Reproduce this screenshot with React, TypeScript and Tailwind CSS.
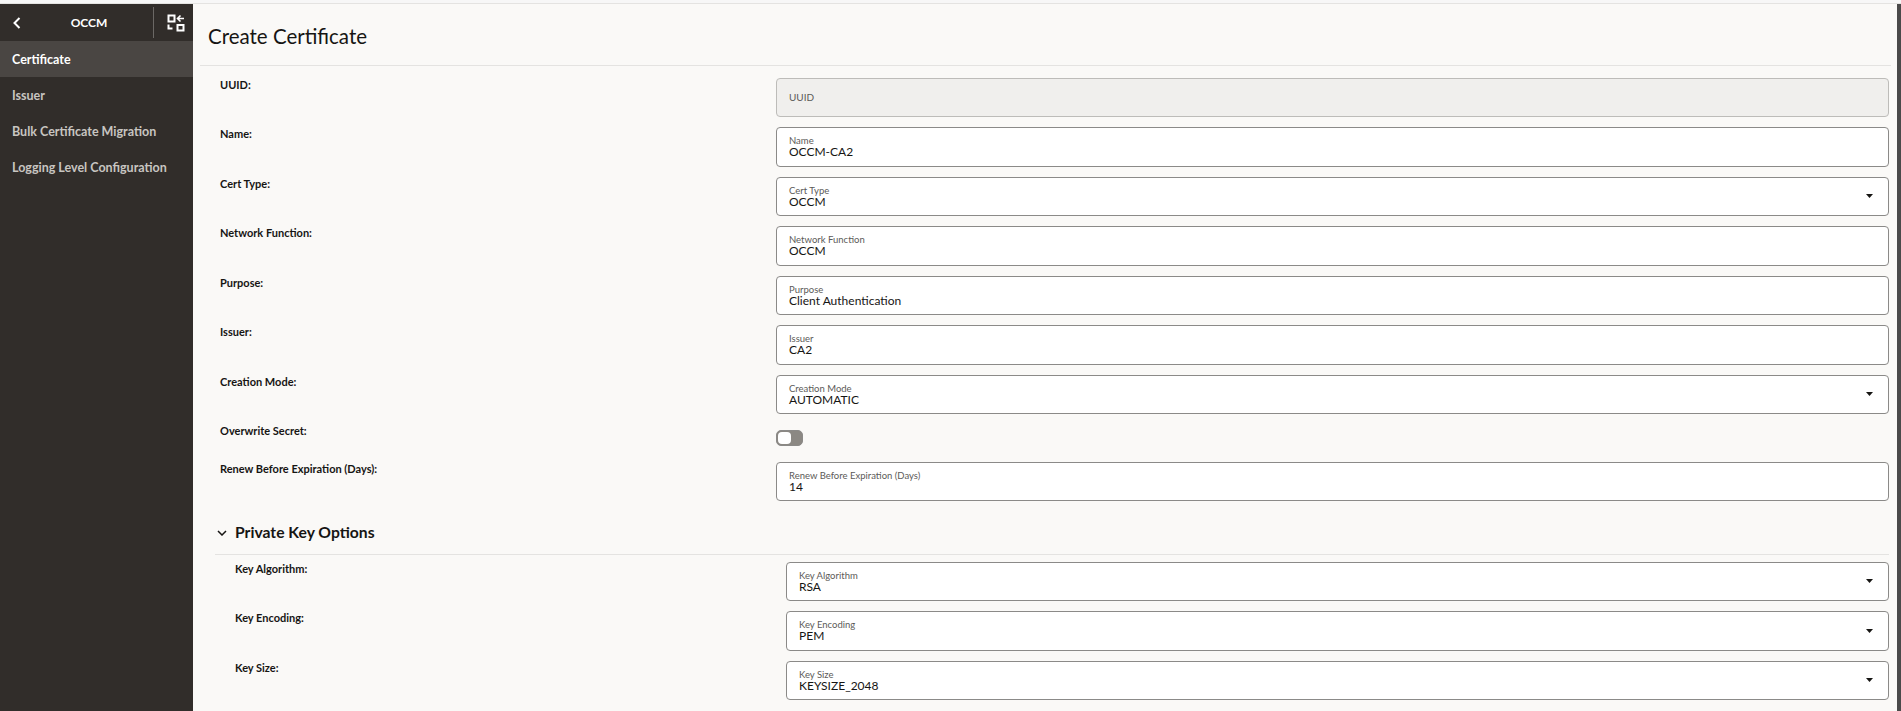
import React from "react";

const font = "font-['Lato','Noto_Sans',sans-serif]";

function Arrow() {
  return (
    <svg width="7" height="4" viewBox="0 0 7 4" className="absolute right-[15px] top-1/2 -translate-y-1/2">
      <path d="M0 0h7L3.5 4z" fill="#161513" />
    </svg>
  );
}

function Field({ label, value, select }: { label: string; value: string; select?: boolean }) {
  return (
    <div className="relative flex h-[39.5px] flex-1 flex-col justify-center rounded-[4px] border border-[#8b8a88] bg-white pl-[12px]">
      <span className="text-[9.5px] leading-[11px] text-[#5c5a58]">{label}</span>
      <span className="text-[12px] leading-[12px] text-[#161513]">{value}</span>
      {select && <Arrow />}
    </div>
  );
}

function Row({ label, children, sub }: { label: string; children: React.ReactNode; sub?: boolean }) {
  return (
    <div className="flex">
      <div className={sub ? "w-[551px] shrink-0 text-[11px] font-bold leading-[14px] text-[#161513]" : "w-[556px] shrink-0 text-[11px] font-bold leading-[14px] text-[#161513]"}>
        {label}
      </div>
      {children}
    </div>
  );
}

const mainFields = [
  { label: "Name", value: "OCCM-CA2" },
  { label: "Cert Type", value: "OCCM", select: true },
  { label: "Network Function", value: "OCCM" },
  { label: "Purpose", value: "Client Authentication" },
  { label: "Issuer", value: "CA2" },
  { label: "Creation Mode", value: "AUTOMATIC", select: true },
];

const keyFields = [
  { label: "Key Algorithm", value: "RSA" },
  { label: "Key Encoding", value: "PEM" },
  { label: "Key Size", value: "KEYSIZE_2048" },
];

export default function App() {
  return (
    <div className={`${font} flex h-[711px] w-[1901px] flex-col overflow-hidden bg-[#faf9f7]`}>
      <div className="h-[4px] shrink-0 border-b border-[#e4e3e1] bg-[#f7f7f7]" />
      <div className="flex min-h-0 flex-1">
        <aside className="flex w-[193px] shrink-0 flex-col bg-[#312d2a]">
          <div className="flex h-[37px] items-center">
            <svg width="8" height="12" viewBox="0 0 8 12" className="ml-[13px]">
              <path d="M6.5 1 1.5 6l5 5" fill="none" stroke="#fff" strokeWidth="2" />
            </svg>
            <span className="ml-[40px] w-[56px] pt-[1px] text-center text-[12px] font-bold text-white">OCCM</span>
            <div className="ml-[36px] h-[31px] w-px bg-[#6b6865]" />
            <svg width="18" height="18" viewBox="0 0 18 18" className="ml-[13px]" fill="none" stroke="#fff" strokeWidth="2">
              <path d="M1.5 1.5h6v6h-6z" />
              <path d="M10.5 11h6v5.5h-6z" />
              <path d="M1.5 10.5v4h4" />
              <path d="M17 4.5h-6M13.5 1.5l-3 3 3 3" strokeWidth="1.6" />
            </svg>
          </div>
          <div className="flex h-[36px] items-center bg-[#4a4643] pl-[12px] pt-[2px] text-[12.5px] font-bold text-white">Certificate</div>
          <div className="flex h-[36px] items-center pl-[12px] pt-[2px] text-[12.5px] font-bold text-[#c8c5c1]">Issuer</div>
          <div className="flex h-[36px] items-center pl-[12px] pt-[2px] text-[12.5px] font-bold text-[#c8c5c1]">Bulk Certificate Migration</div>
          <div className="flex h-[36px] items-center pl-[12px] pt-[2px] text-[12.5px] font-bold text-[#c8c5c1]">Logging Level Configuration</div>
        </aside>
        <main className="min-w-0 flex-1 pl-[7px]">
          <div className="mr-[6px] flex h-[62px] items-center border-b border-[#e4e3e1] pl-[8px] pt-[4px] text-[20.5px] text-[#161513]">
            Create Certificate
          </div>
          <div className="pl-[20px] pr-[8px] pt-[11.5px]">
            <div className="flex flex-col gap-[10px]">
              <Row label="UUID:">
                <div className="flex h-[39.5px] flex-1 items-center rounded-[4px] border border-[#bdbcb9] bg-[#f0efed] pl-[12px] text-[10px] text-[#5c5a58]">
                  UUID
                </div>
              </Row>
              {mainFields.map((f) => (
                <Row key={f.label} label={f.label + ":"}>
                  <Field {...f} />
                </Row>
              ))}
            </div>
            <div className="mt-[10px] flex h-[27.5px]">
              <div className="w-[556px] shrink-0 text-[11px] font-bold leading-[14px] text-[#161513]">Overwrite Secret:</div>
              <div className="mt-[5.5px] flex h-[16px] w-[27px] items-center rounded-[5px] border border-[#8b8a88] bg-[#8b8883] pl-[1px]">
                <div className="h-[12px] w-[13px] rounded-[4px] bg-white" />
              </div>
            </div>
            <div className="mt-[10px]">
              <Row label="Renew Before Expiration (Days):">
                <Field label="Renew Before Expiration (Days)" value="14" />
              </Row>
            </div>
            <div className="-ml-[5px] mt-[15px] flex h-[39px] items-center border-b border-[#e4e3e1] pb-[5px]">
              <svg width="10" height="6" viewBox="0 0 10 6" className="ml-[2px]">
                <path d="M1 1l4 4 4-4" fill="none" stroke="#161513" strokeWidth="1.5" />
              </svg>
              <span className="ml-[8px] text-[15.7px] font-bold text-[#161513]">Private Key Options</span>
            </div>
            <div className="mt-[6.5px] flex flex-col gap-[10px] pl-[15px]">
              {keyFields.map((f) => (
                <Row key={f.label} label={f.label + ":"} sub>
                  <Field {...f} select />
                </Row>
              ))}
            </div>
          </div>
        </main>
        <div className="w-[4px] shrink-0 bg-[#4a4a4a]" />
      </div>
    </div>
  );
}
